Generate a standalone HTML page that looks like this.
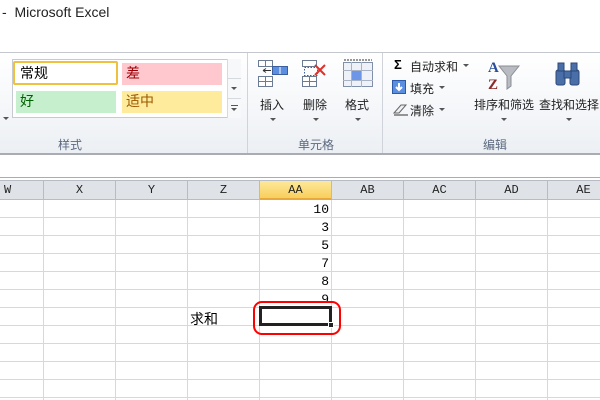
<!DOCTYPE html>
<html><head><meta charset="utf-8"><style>
*{margin:0;padding:0;box-sizing:border-box}
body{width:600px;height:400px;overflow:hidden;background:#fff;font-family:"Liberation Sans","Noto Sans CJK SC",sans-serif;position:relative}
.a{position:absolute}
.cj{font-family:"Liberation Sans","Noto Sans CJK SC",sans-serif;font-size:12px;color:#222;white-space:nowrap}
.gl{color:#5c6a80;font-size:12px}
.arr{position:absolute;width:0;height:0;border-left:3px solid transparent;border-right:3px solid transparent;border-top:3px solid #555}
.vl{position:absolute;top:200px;bottom:0;width:1px;background:#d8d8d8}
.hl{position:absolute;left:0;right:0;height:1px;background:#d8d8d8}
.hd{position:absolute;top:181px;height:19px;text-align:center;font-family:"Liberation Mono",monospace;font-size:12px;line-height:19px;color:#222;border-right:1px solid #b7bcc4}
.num{position:absolute;left:259px;width:70px;text-align:right;font-family:"Liberation Mono",monospace;font-size:13px;color:#000}
</style></head><body>
<div class="a" style="left:2px;top:4px;font-size:14px;color:#222">-&nbsp; Microsoft Excel</div>
<!-- ribbon -->
<div class="a" style="left:0;top:52px;width:600px;height:103px;background:linear-gradient(#fff,#f4f6f9 60%,#eceff3);border-top:1px solid #c4c8ce;border-bottom:2px solid #a9adb3"></div>
<div class="a" style="left:247px;top:53px;width:1px;height:100px;background:#d0d4da"></div>
<div class="a" style="left:382px;top:53px;width:1px;height:100px;background:#d0d4da"></div>
<!-- styles gallery -->
<div class="a" style="left:12px;top:59px;width:229px;height:59px;border:1px solid #c6cad0;background:#fff"></div>
<div class="a" style="left:13px;top:61px;width:105px;height:24px;border:2px solid #f0c040;border-radius:2px;background:#fff"></div>
<div class="a cj" style="left:20px;top:63px;font-size:14px;color:#000">常规</div>
<div class="a" style="left:122px;top:63px;width:100px;height:22px;background:#ffc7ce"></div>
<div class="a cj" style="left:126px;top:63px;font-size:14px;color:#9c0006">差</div>
<div class="a" style="left:16px;top:91px;width:100px;height:22px;background:#c6efce"></div>
<div class="a cj" style="left:20px;top:91px;font-size:14px;color:#006100">好</div>
<div class="a" style="left:122px;top:91px;width:100px;height:22px;background:#ffeb9c"></div>
<div class="a cj" style="left:126px;top:91px;font-size:14px;color:#9c5700">适中</div>
<div class="a" style="left:227px;top:59px;width:14px;height:59px;border-left:1px solid #d6d9de;background:#f7f8fa"></div>
<div class="a" style="left:227px;top:78px;width:14px;height:1px;background:#d6d9de"></div>
<div class="a" style="left:227px;top:98px;width:14px;height:1px;background:#d6d9de"></div>
<div class="arr" style="left:231px;top:87px"></div>
<div class="arr" style="left:231px;top:108px"></div>
<div class="a" style="left:231px;top:105px;width:7px;height:1px;background:#555"></div>
<div class="arr" style="left:3px;top:117px"></div>
<div class="a gl" style="left:58px;top:136px">样式</div>
<!-- cells group -->
<svg class="a" style="left:256px;top:58px" width="36" height="32"><g fill="#fff" stroke="#6b7b94"><rect x="2.5" y="2.5" width="14" height="6"/><rect x="2.5" y="18.5" width="14" height="10"/><line x1="9.5" y1="2" x2="9.5" y2="9"/><line x1="2" y1="23.5" x2="17" y2="23.5"/><line x1="9.5" y1="18" x2="9.5" y2="29"/></g><rect x="16.5" y="8.5" width="15" height="8" fill="#5b8ee0" stroke="#3a5f9e"/><line x1="24" y1="9" x2="24" y2="16" stroke="#fff"/><path d="M7 12.5h8M7 12.5l3-2M7 12.5l3 2" stroke="#333" fill="none"/></svg>
<div class="a cj" style="left:260px;top:96px">插入</div><div class="arr" style="left:270px;top:118px"></div>
<svg class="a" style="left:300px;top:58px" width="30" height="32"><g fill="#fff" stroke="#6b7b94"><rect x="2.5" y="2.5" width="14" height="6"/><rect x="2.5" y="18.5" width="14" height="10"/><line x1="2" y1="23.5" x2="17" y2="23.5"/><line x1="9.5" y1="18" x2="9.5" y2="29"/></g><rect x="4.5" y="9.5" width="13" height="8" fill="none" stroke="#3a5f9e" stroke-dasharray="1.5 1.5"/><path d="M15 7l10 10M25 7L15 17" stroke="#e0302a" stroke-width="2"/></svg>
<div class="a cj" style="left:303px;top:96px">删除</div><div class="arr" style="left:313px;top:118px"></div>
<svg class="a" style="left:341px;top:58px" width="34" height="32"><rect x="2.5" y="4.5" width="29" height="24" fill="#eef2f8" stroke="#8090a8"/><rect x="10" y="12" width="10" height="10" fill="#6d96e6"/><path d="M2 12.5h30M2 22.5h30M10.5 4v25M20.5 4v25" stroke="#a8b4c6"/><path d="M3 2h28" stroke="#333" stroke-dasharray="2 1"/></svg>
<div class="a cj" style="left:345px;top:96px">格式</div><div class="arr" style="left:355px;top:118px"></div>
<div class="a gl" style="left:298px;top:136px">单元格</div>
<!-- edit group -->
<div class="a" style="left:394px;top:57px;font-size:13px;font-weight:bold;color:#000">Σ</div>
<div class="a cj" style="left:410px;top:58px">自动求和</div><div class="arr" style="left:463px;top:64px"></div>
<svg class="a" style="left:392px;top:80px" width="14" height="14"><rect x=".5" y=".5" width="13" height="13" fill="#5b8ee0" stroke="#2d5aa8"/><path d="M7 3v7M4 7l3 3 3-3" stroke="#fff" stroke-width="2" fill="none"/></svg>
<div class="a cj" style="left:410px;top:80px">填充</div><div class="arr" style="left:439px;top:86px"></div>
<svg class="a" style="left:392px;top:102px" width="16" height="14"><path d="M2 11l7-8h5l-7 8z" fill="#eef0f3" stroke="#666"/><path d="M2 13h14" stroke="#333"/></svg>
<div class="a cj" style="left:410px;top:102px">清除</div><div class="arr" style="left:439px;top:108px"></div>
<svg class="a" style="left:487px;top:58px" width="34" height="34"><text x="1" y="14" font-family="Liberation Serif" font-weight="bold" font-size="15" fill="#2a4d9a">A</text><text x="1" y="31" font-family="Liberation Serif" font-weight="bold" font-size="15" fill="#8b2a2a">Z</text><path d="M12 8h20l-8 10v10l-4 3V18z" fill="#b8bcc2" stroke="#8a8e94"/></svg>
<div class="a cj" style="left:474px;top:96px">排序和筛选</div><div class="arr" style="left:501px;top:118px"></div>
<svg class="a" style="left:553px;top:60px" width="30" height="28"><g fill="#4a6fa8" stroke="#2a4878"><rect x="3" y="10" width="9" height="15" rx="2"/><rect x="17" y="10" width="9" height="15" rx="2"/><rect x="5" y="3" width="6" height="8"/><rect x="18" y="3" width="6" height="8"/><rect x="11" y="11" width="7" height="7"/></g></svg>
<div class="a cj" style="left:539px;top:96px">查找和选择</div><div class="arr" style="left:566px;top:118px"></div>
<div class="a gl" style="left:483px;top:136px">编辑</div>
<!-- formula bar area -->
<div class="a" style="left:0;top:177px;width:600px;height:1px;background:#a9adb3"></div>
<div class="a" style="left:0;top:180px;width:600px;height:20px;background:#dfe3e8;border-top:1px solid #b7bcc4;border-bottom:1px solid #b7bcc4"></div>
<div class="hd" style="left:0;width:44px;text-align:left;padding-left:4px">W</div>
<div class="hd" style="left:44px;width:72px">X</div>
<div class="hd" style="left:116px;width:72px">Y</div>
<div class="hd" style="left:188px;width:72px">Z</div>
<div class="hd" style="left:260px;width:72px;background:linear-gradient(#fde99a,#f8cf5c);border-bottom:2px solid #e8a93a">AA</div>
<div class="hd" style="left:332px;width:72px">AB</div>
<div class="hd" style="left:404px;width:72px">AC</div>
<div class="hd" style="left:476px;width:72px">AD</div>
<div class="hd" style="left:548px;width:72px">AE</div>
<!-- grid -->
<div class="vl" style="left:43px"></div><div class="vl" style="left:115px"></div><div class="vl" style="left:187px"></div><div class="vl" style="left:259px"></div><div class="vl" style="left:331px"></div><div class="vl" style="left:403px"></div><div class="vl" style="left:475px"></div><div class="vl" style="left:547px"></div>
<div class="hl" style="top:217px"></div><div class="hl" style="top:235px"></div><div class="hl" style="top:253px"></div><div class="hl" style="top:271px"></div><div class="hl" style="top:289px"></div><div class="hl" style="top:307px"></div><div class="hl" style="top:325px"></div><div class="hl" style="top:343px"></div><div class="hl" style="top:361px"></div><div class="hl" style="top:379px"></div><div class="hl" style="top:397px"></div>
<div class="num" style="top:202px">10</div>
<div class="num" style="top:220px">3</div>
<div class="num" style="top:238px">5</div>
<div class="num" style="top:256px">7</div>
<div class="num" style="top:274px">8</div>
<div class="num" style="top:292px">9</div>
<div class="a" style="left:0;top:300px;width:600px;height:7px;background:transparent"></div>
<div class="a cj" style="left:190px;top:309px;font-size:14px;color:#000">求和</div>
<div class="a" style="left:259px;top:306px;width:73px;height:20px;border:3px solid #222;background:#fff"></div>
<div class="a" style="left:328px;top:322px;width:6px;height:6px;background:#222;border:1px solid #fff"></div>
<div class="a" style="left:253px;top:301px;width:88px;height:34px;border:2.5px solid #f00;border-radius:9px"></div>
</body></html>
